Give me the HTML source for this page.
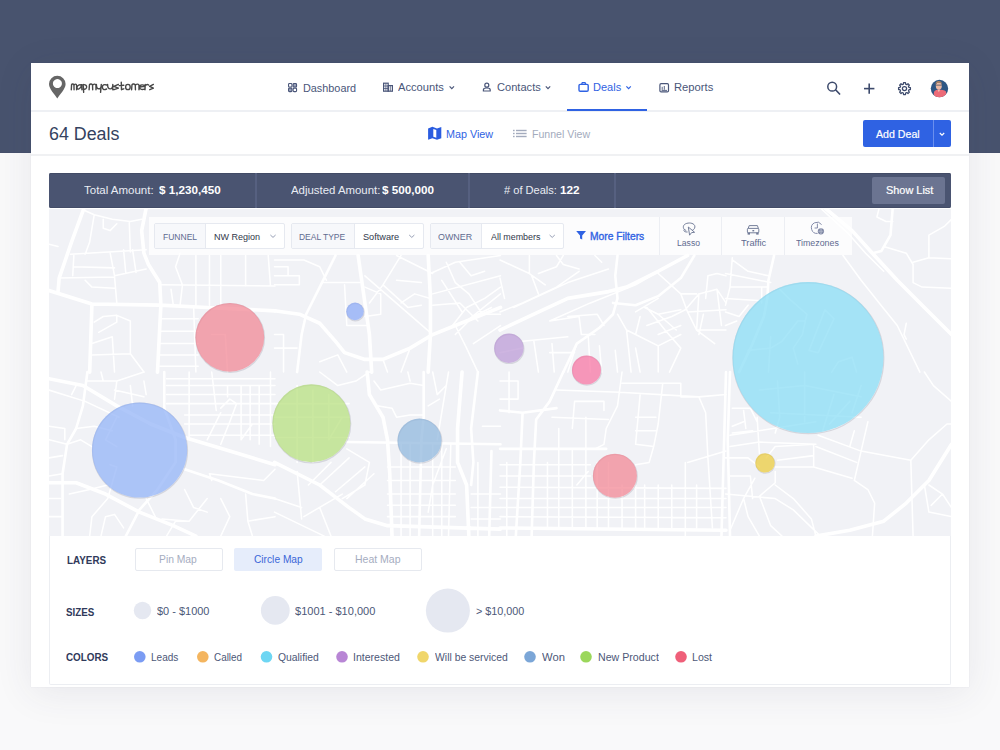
<!DOCTYPE html>
<html><head><meta charset="utf-8">
<style>
*{margin:0;padding:0;box-sizing:border-box}
html,body{width:1000px;height:750px;overflow:hidden}
body{background:#f4f5f7;position:relative;font-family:"Liberation Sans",sans-serif}
.a{position:absolute}
.t{position:absolute;white-space:pre;line-height:normal;font-family:"Liberation Sans",sans-serif}
svg{position:absolute;overflow:visible}
</style></head><body>
<!-- page background -->
<div class="a" style="left:0;top:0;width:1000px;height:153px;background:#48536e"></div>
<div class="a" style="left:0;top:152px;width:1000px;height:1px;background:#46506c"></div>
<div class="a" style="left:0;top:153px;width:1000px;height:597px;background:#f9f9fa"></div>
<!-- card -->
<div class="a" style="left:31px;top:63px;width:938px;height:624px;background:#fff;box-shadow:0 0 1px rgba(40,50,80,.10),0 6px 36px rgba(50,60,90,.09)"></div>
<div class="a" style="left:31px;top:110px;width:938px;height:2px;background:#eef0f4"></div>
<div class="a" style="left:567px;top:109px;width:80px;height:2px;background:#2f62e3"></div>
<div class="a" style="left:31px;top:154px;width:938px;height:2px;background:#f0f1f3"></div>

<!-- logo pin -->
<svg style="left:0;top:0" width="1000" height="120" viewBox="0 0 1000 120">
  <path d="M57.3,98.6 C55,94.5 49,89 49,84 A8.3,8.3 0 0 1 65.6,84 C65.6,89 59.6,94.5 57.3,98.6 Z M57.4,79.1 A4.5,4.5 0 1 0 57.41,79.1 Z" fill="#666666" fill-rule="evenodd"/>
  <!--LOGO-->
  <path d="M71.30,89.7 L71.56,84.80000000000001 C72.09,83.5 73.95,83.80000000000001 73.95,85.60000000000001 L74.06,89.7 M73.95,85.60000000000001 C74.48,83.5 76.60,83.80000000000001 76.60,85.60000000000001 L76.60,89.7 M81.90,85.4 C79.94,84.0 77.00,85.0 77.00,87.8 C77.25,90.0 80.43,89.7 81.66,84.80000000000001 L81.90,89.7 M83.22,84.4 L83.66,92.4 M83.00,84.80000000000001 C87.84,83.60000000000001 87.84,90.10000000000001 83.22,89.10000000000001 M89.10,89.7 L89.44,84.80000000000001 C90.13,83.5 92.55,83.80000000000001 92.55,85.60000000000001 L92.69,89.7 M92.55,85.60000000000001 C93.24,83.5 96.00,83.80000000000001 96.00,85.60000000000001 L96.00,89.7 M96.40,84.4 C96.40,90.2 101.30,90.2 101.30,84.4 L100.56,92.4 M106.60,85.0 C104.08,84.0 102.40,85.2 102.40,87.0 C102.40,90.10000000000001 104.50,89.9 106.60,89.0 M107.60,84.4 C107.60,90.3 112.80,90.3 112.80,84.4 L112.80,89.7 M118.40,84.4 L113.80,86.4 L118.40,88.2 L114.03,89.7 M121.27,82.2 L121.50,89.7 M119.20,85.60000000000001 L123.80,85.2 M121.50,89.5 L123.80,88.8 M125.60,87.0 A2.30,2.65 0 1 0 130.20,87.0 A2.30,2.65 0 1 0 125.60,87.0 M131.60,89.7 L131.97,84.80000000000001 C132.71,83.5 135.30,83.80000000000001 135.30,85.60000000000001 L135.45,89.7 M135.30,85.60000000000001 C136.04,83.5 139.00,83.80000000000001 139.00,85.60000000000001 L139.00,89.7 M139.84,87.0 L144.30,86.4 C144.30,84.10000000000001 139.60,84.4 139.60,87.0 C139.60,90.0 142.89,89.7 144.30,89.10000000000001 M145.18,84.4 L145.00,89.7 M145.00,86.0 C146.44,84.4 147.52,84.2 148.60,85.0 M153.40,84.4 L149.60,86.4 L153.40,88.2 L149.79,89.7" fill="none" stroke="#474747" stroke-width="1.4" stroke-linecap="round" stroke-linejoin="round"/>
  <!-- dashboard icon -->
  <g fill="none" stroke="#4a5679" stroke-width="1.1">
    <rect x="288.55" y="83.55" width="3.4" height="3.5" rx="0.9"/>
    <rect x="293.15" y="83.55" width="3.4" height="3.5" rx="0.9" fill="#9aa2b9"/>
    <rect x="288.55" y="88.15" width="3.4" height="3.5" rx="0.9" fill="#9aa2b9"/>
    <rect x="293.15" y="88.15" width="3.4" height="3.5" rx="0.9"/>
  </g>
  <!-- accounts icon (building) -->
  <g fill="none" stroke="#4a5679" stroke-width="1.2">
    <rect x="383.6" y="83.2" width="4.6" height="8"/>
    <rect x="388.2" y="85.6" width="4.2" height="5.6"/>
  </g>
  <g stroke="#4a5679" stroke-width="0.8">
    <line x1="385.9" y1="83.5" x2="385.9" y2="91"/>
    <line x1="383.8" y1="86" x2="388" y2="86"/>
    <line x1="383.8" y1="88.5" x2="388" y2="88.5"/>
    <line x1="390.3" y1="86" x2="390.3" y2="91"/>
  </g>
  <path d="M449.6,86.4 L451.8,88.6 L454,86.4" fill="none" stroke="#4a5679" stroke-width="1.2"/>
  <!-- contacts icon -->
  <circle cx="486.8" cy="85.2" r="2" fill="none" stroke="#4a5679" stroke-width="1.2"/>
  <path d="M483.4,91 L483.4,89.8 C483.4,88.6 484.4,88 486.8,88 C489.2,88 490.2,88.6 490.2,89.8 L490.2,91 Z" fill="none" stroke="#4a5679" stroke-width="1.2"/>
  <path d="M545.8,86.4 L548,88.6 L550.2,86.4" fill="none" stroke="#4a5679" stroke-width="1.2"/>
  <!-- deals icon briefcase -->
  <rect x="579" y="84.4" width="9.2" height="6.8" rx="1.2" fill="none" stroke="#2f62e3" stroke-width="1.4"/>
  <path d="M581.6,84.4 L582.3,82.6 L585,82.6 L585.7,84.4" fill="none" stroke="#2f62e3" stroke-width="1.3"/>
  <path d="M626.4,86.4 L628.6,88.6 L630.8,86.4" fill="none" stroke="#2f62e3" stroke-width="1.2"/>
  <!-- reports icon -->
  <rect x="659.9" y="83.7" width="8.6" height="8.2" rx="1.2" fill="none" stroke="#4a5679" stroke-width="1.2"/>
  <g stroke="#4a5679" stroke-width="0.9">
    <line x1="662.2" y1="86.8" x2="662.2" y2="89.8"/>
    <line x1="664.3" y1="86" x2="664.3" y2="89.8"/>
    <line x1="661.6" y1="90.4" x2="667" y2="90.4"/>
  </g>
  <!-- search -->
  <circle cx="832.2" cy="86.7" r="4.4" fill="none" stroke="#3d4a6c" stroke-width="1.5"/>
  <line x1="835.8" y1="90" x2="839.6" y2="94" stroke="#3d4a6c" stroke-width="1.7" stroke-linecap="round"/>
  <!-- plus -->
  <line x1="864" y1="88.6" x2="874.4" y2="88.6" stroke="#3d4a6c" stroke-width="1.6"/>
  <line x1="869.2" y1="83.4" x2="869.2" y2="93.8" stroke="#3d4a6c" stroke-width="1.6"/>
  <!-- gear -->
  <g fill="none" stroke="#3d4a6c" stroke-width="1.25" stroke-linejoin="round">
    <path d="M908.96,87.49 L910.42,87.61 L910.42,89.59 L908.96,89.71 L908.44,90.97 L909.38,92.09 L907.99,93.48 L906.87,92.54 L905.61,93.06 L905.49,94.52 L903.51,94.52 L903.39,93.06 L902.13,92.54 L901.01,93.48 L899.62,92.09 L900.56,90.97 L900.04,89.71 L898.58,89.59 L898.58,87.61 L900.04,87.49 L900.56,86.23 L899.62,85.11 L901.01,83.72 L902.13,84.66 L903.39,84.14 L903.51,82.68 L905.49,82.68 L905.61,84.14 L906.87,84.66 L907.99,83.72 L909.38,85.11 L908.44,86.23 Z"/>
    <circle cx="904.5" cy="88.6" r="2.1"/>
  </g>
  <!-- avatar -->
  <defs><clipPath id="av"><circle cx="939.45" cy="88.55" r="8.7"/></clipPath></defs>
  <g clip-path="url(#av)">
    <rect x="930" y="79" width="19" height="19" fill="#2d5684"/>
    <path d="M933.5,98 L934,92 C934.5,90.5 936.5,89.8 938.8,89.6 C941.2,89.8 944.5,90.2 946,91.5 L947,98 Z" fill="#ec6b78"/>
    <path d="M937.5,89.6 L938.8,92.2 L940.2,89.6 Z" fill="#f1c0b0"/>
    <ellipse cx="938.8" cy="86" rx="3" ry="3.6" fill="#eab8a4"/>
    <path d="M935.6,85 C935.4,81.8 937,81 938.8,81 C940.8,81 942.2,82 941.9,85 L941.2,83.2 C940,82.6 937.6,82.6 936.4,83.3 Z" fill="#a88062"/>
    <rect x="935.8" y="84.6" width="6" height="1.1" fill="#5b5f6a" opacity="0.8"/>
  </g>
  <!-- map view icon -->
  <path d="M428.1,128.4 L432.4,126.8 L437,128.4 L441.3,126.9 L441.3,138.2 L437,139.8 L432.4,138.2 L428.1,139.8 Z" fill="#2a5ce0"/>
  <path d="M433.3,129.1 L436.3,130.1 L436.3,137.8 L433.3,136.8 Z" fill="#ffffff"/>
  <!-- list icon -->
  <g fill="#a3abbd">
    <rect x="513" y="129.8" width="1.6" height="1.4"/>
    <rect x="513" y="132.8" width="1.6" height="1.4"/>
    <rect x="513" y="135.8" width="1.6" height="1.4"/>
    <rect x="516" y="129.8" width="10.6" height="1.4"/>
    <rect x="516" y="132.8" width="10.6" height="1.4"/>
    <rect x="516" y="135.8" width="10.6" height="1.4"/>
  </g>
</svg>

<!-- add deal button -->
<div class="a" style="left:863px;top:120px;width:88px;height:26.5px;background:#2f62e3;border-radius:2px"></div>
<div class="a" style="left:933px;top:120px;width:1px;height:26.5px;background:#6a8fee"></div>
<svg style="left:0;top:0" width="1000" height="200" viewBox="0 0 1000 200">
  <path d="M939.8,133 L942,135.2 L944.2,133" fill="none" stroke="#ffffff" stroke-width="1.2"/>
</svg>

<!-- stats bar -->
<div class="a" style="left:49px;top:173px;width:902px;height:35px;background:#4a5471;border-radius:2px;box-shadow:inset 0 1px 0 #424b66,inset 0 -1px 0 #434c67"></div>
<div class="a" style="left:255.4px;top:173px;width:1.6px;height:35px;background:#566080"></div>
<div class="a" style="left:468.4px;top:173px;width:1.6px;height:35px;background:#566080"></div>
<div class="a" style="left:614.4px;top:173px;width:1.6px;height:35px;background:#566080"></div>
<div class="a" style="left:872px;top:177px;width:73px;height:26.5px;background:#6b7491;border-radius:2px"></div>

<!-- map -->
<div class="a" style="left:49px;top:209px;width:902px;height:327px;background:#f1f2f6;overflow:hidden"><div style="position:absolute;left:0;top:-1px;width:902px;height:328px">
<svg width="902" height="328" viewBox="0 0 902 328" style="left:0;top:0">
<g fill="none" stroke="#ffffff" stroke-linecap="round" stroke-linejoin="round">
<g transform="translate(0.0,0) scale(0.226)">
<path stroke-width="16" d="M0,365 L190,425 L490,430 L700,440 L1000,455 M155,0 L100,150 L45,310 L40,370 M430,0 L410,100 L420,200 L440,250 L490,330 L495,430 L480,726 M190,425 L180,726"/>
<path stroke-width="6.8" d="M45,310 L290,305 L300,420 M95,205 L430,185 M110,210 L105,300 M110,260 L290,265 M270,195 L290,300 M160,320 L190,350 L290,355 M155,10 L200,30 L280,50 L360,60 L410,50 M200,30 L180,150 L160,205 M240,50 L240,90 L270,100 L300,70 M355,60 L360,195 M330,185 L340,290 M370,185 L385,285 M290,300 L430,270 M490,340 L1000,345 M580,200 L560,260 L590,340 M650,210 L650,430 M710,210 L710,430 M760,210 L760,430 M870,210 L870,345 M970,210 L980,345 M540,360 L550,430 M590,345 L580,430 M0,160 L40,170 M200,505 L240,480 L300,475 L300,505 L220,550 M190,600 L280,570 L290,726 M190,650 L360,645 L420,726 M300,475 L360,500 L360,645 M490,490 L660,490 M490,545 L660,545 M490,600 L660,600 M490,650 L660,650 M490,700 L660,700 M640,440 L650,726 M720,560 L780,560 L790,726"/>
</g>
<g transform="translate(225.5,0) scale(0.226)">
<path stroke-width="16" d="M0,455 L110,470 L200,510 L270,590 L310,640 L400,670 L480,670 L600,620 L700,560 L800,520 L1000,440 M370,210 L400,420 L420,560 L430,726 M680,210 L690,400 L690,560 L680,726"/>
<path stroke-width="11.5" d="M270,210 L210,330 L140,470 L120,560 L100,726"/>
<path stroke-width="6.8" d="M0,300 L110,300 L110,340 L0,340 M0,230 L130,230 M210,330 L380,330 M310,340 L320,520 L410,520 M400,480 L470,470 L470,380 L400,350 M480,340 L590,440 L650,430 M540,320 L650,330 M600,240 L700,290 M560,210 L480,340 L420,420 M690,290 L800,240 L1000,210 M400,300 L700,560 M700,380 L1000,300 M850,500 L1000,380 M760,240 L800,330 L860,380 L920,470 M820,240 L870,300 L930,280 M700,430 L820,420 L900,500 M740,320 L830,460 M0,560 L40,560 L40,726 M0,620 L100,620 M200,680 L280,650 L320,726 M800,520 L850,620 L900,726 M560,726 L600,620 M780,530 L850,440 L930,400 L1000,350 M800,560 L880,480 L960,440 M880,600 L1000,520 M920,470 L1000,470 M480,670 L500,726 M540,210 L600,240 M0,260 L60,260 L60,300 M130,230 L200,260 L230,320 M560,420 L620,380 L690,400"/>
</g>
<g transform="translate(451.0,0) scale(0.226)">
<path stroke-width="16" d="M0,540 L150,470 L300,400 L480,370 L560,350 L700,280 L830,210"/>
<path stroke-width="11.5" d="M280,726 L340,600 L440,530 L500,470 L520,400 L510,300 L520,210 M500,420 L600,430 L700,390 L800,310 L860,210"/>
<path stroke-width="6.8" d="M0,460 L100,420 L250,350 L350,280 M60,440 L300,330 L480,270 M0,230 L130,290 L200,340 M130,210 L130,290 M250,210 L280,250 L350,270 M0,310 L20,400 M140,300 L170,380 M420,210 L450,240 M700,290 L800,380 L830,460 L870,540 L950,600 M600,460 L700,400 M620,480 L600,560 L700,610 L800,560 M650,440 L730,540 L800,620 L750,726 M700,470 L780,540 M820,450 L880,380 L960,360 L1000,420 M830,460 L1000,450 M880,380 L870,540 M920,300 L960,290 L1000,300 M920,300 L910,400 M960,360 L980,520 M870,540 L1000,540 M300,480 L430,470 L460,520 M220,500 L350,480 L360,560 L420,560 M100,590 L300,570 M150,590 L170,726 M230,600 L240,726 M390,560 L400,726 M440,610 L450,726 M510,630 L520,726 M560,540 L580,726 M520,470 L560,540 L600,560 M220,500 L400,420 L600,340 L720,270 M420,380 L560,350 M640,440 L700,470 L800,450 M650,520 L760,480 L820,450 M700,560 L800,520 M800,380 L870,380 M900,470 L880,560 M0,640 L100,620 M220,640 L330,640 M280,210 L250,260 L170,290 M340,600 L300,726 M600,620 L620,726 M700,610 L700,726"/>
</g>
<g transform="translate(676.5,0) scale(0.226)">
<path stroke-width="16" d="M440,0 L560,100 L650,200 L760,320 L880,440 L1000,560"/>
<path stroke-width="11.5" d="M215,210 L190,320 L185,400 L170,480 L120,600 L60,726 M740,0 L730,120 L690,190 L650,200"/>
<path stroke-width="6.8" d="M420,0 L540,110 L620,200 L700,280 M520,210 L600,320 L680,420 L760,520 L860,726 M700,170 L800,200 L830,250 L830,330 L870,350 L1000,355 M830,240 L900,220 L1000,225 M900,220 L900,120 L970,80 L1000,50 M680,0 L670,40 L710,60 L740,60 M800,510 L790,560 L800,580 M0,290 L200,330 M30,220 L20,350 L0,430 M20,350 L190,350 M0,400 L160,410 M0,460 L60,480 L100,430 M0,520 L50,500 M160,350 L160,420 M30,230 L100,280 L190,300 M240,360 L280,400 L360,470 L340,560 L300,620 L320,690 M200,570 L190,726 M100,630 L200,620 L250,590 L320,500 L350,500 M370,630 L440,450 L480,490 L410,640 Z M470,726 L500,680 L560,660 L580,726"/>
</g>
<g transform="translate(0.0,164) scale(0.226)">
<path stroke-width="16" d="M0,30 L150,60 L300,150 L450,230 L600,290 L800,350 L1000,410 M0,490 L120,490 L250,540 L400,620 L550,680 L650,726"/>
<path stroke-width="11.5" d="M170,0 L150,150 L120,250 L80,320 L60,450 L60,726 M510,0 L510,160 L560,300 L560,400 L480,520 L400,610 L340,726 M600,430 L750,480 L900,540 L1000,560"/>
<path stroke-width="6.8" d="M0,80 L160,130 L310,200 M120,60 L100,100 M230,0 L240,40 M300,40 L290,120 M360,60 L370,150 M420,40 L430,100 M170,40 L300,40 L420,0 M290,80 L420,110 M520,30 L1000,30 M520,60 L1000,60 M520,100 L1000,100 M520,140 L1000,140 M600,190 L1000,190 M600,230 L1000,230 M620,280 L1000,280 M620,0 L620,290 M720,0 L740,170 M790,60 L790,110 M850,60 L850,300 M890,60 L890,300 M930,60 L930,320 M980,0 L980,330 M760,160 L800,120 L830,140 L800,220 L760,320 M700,300 L760,180 M850,300 L900,230 M0,240 L70,250 L70,300 M80,320 L140,300 L190,330 M0,460 L60,450 M0,560 L50,560 M0,640 L60,640 M270,410 L300,420 L260,560 L190,640 L180,726 M230,726 L250,640 L290,630 L330,690 M710,450 L720,480 M710,450 L950,480 L1000,430 M700,560 L620,660 L500,650 M870,540 L880,660 L1000,640 M880,660 L900,726 M90,540 L180,520 L260,500 M0,380 L60,370 M0,300 L80,320 M120,250 L200,240 L280,260 M300,200 L250,300 L300,330 M430,560 L470,640 M600,520 L640,600 L700,620 M760,560 L800,640 L760,726 M520,726 L560,660 L620,660"/>
</g>
<g transform="translate(225.5,164) scale(0.226)">
<path stroke-width="16" d="M0,400 L200,500 L330,600 L400,650 L500,680 L1000,695 M410,0 L420,100 L480,200 L500,300 L510,450 L520,726 M830,0 L810,250 L810,400 L850,500 L860,726"/>
<path stroke-width="11.5" d="M660,0 L660,200 L650,300 L640,726 M320,310 L1000,320 M900,0 L870,250 L880,400 L870,500 M960,350 L950,726"/>
<path stroke-width="6.8" d="M560,320 L560,726 M600,320 L600,726 M700,320 L700,726 M740,320 L740,726 M780,320 L770,726 M500,420 L800,420 M500,480 L800,480 M500,540 L800,540 M500,590 L800,590 M500,640 L800,640 M870,540 L1000,540 M870,600 L1000,600 M870,650 L1000,650 M900,400 L900,726 M0,560 L120,600 M130,640 L300,540 M0,620 L220,726 M200,600 L250,726 M100,440 L120,650 M320,340 L420,400 L400,500 L300,560 M250,400 L150,500 M330,380 L200,500 M400,420 L270,530 M440,450 L320,560 M440,40 L470,80 L600,50 L660,60 M200,0 L280,60 L360,40 L420,0 M590,0 L600,40 M460,150 L520,160 L540,200 L600,190 L660,190 M700,0 L720,100 L760,60 M730,120 L680,150 M770,0 L720,300 M920,240 L1000,240 M760,340 L700,500 L680,620 M0,140 L330,140 M0,200 L330,200 M0,290 L330,290 M100,60 L100,400 M170,80 L170,400 M240,100 L240,300 L300,200"/>
</g>
<g transform="translate(451.0,164) scale(0.226)">
<path stroke-width="16" d="M0,690 L1000,700"/>
<path stroke-width="11.5" d="M280,0 L220,130 L160,210 L150,400 L140,726 M100,180 L90,400 L70,726 M1000,0 L980,726 M0,170 L100,180 L250,160 M0,340 L470,340"/>
<path stroke-width="6.8" d="M30,400 L30,726 M210,400 L210,690 M260,250 L260,690 M320,340 L320,690 M380,200 L380,690 M430,400 L430,690 M480,400 L480,690 M540,500 L540,690 M600,500 L600,690 M640,500 L640,690 M700,500 L700,690 M760,500 L760,690 M820,400 L820,726 M870,500 L870,690 M920,380 L940,690 M0,410 L400,410 M0,460 L400,460 M0,510 L1000,515 M0,560 L1000,560 M0,600 L1000,600 M0,640 L1000,645 M540,0 L520,150 L470,250 L460,320 L420,340 M620,100 L600,320 L680,330 L660,400 L600,410 M720,50 L700,230 L680,330 M540,50 L800,50 L800,110 L880,110 L1000,100 M880,110 L910,180 L920,380 M830,400 L1000,350 M250,80 L530,90 L880,110 M230,200 L480,210 M330,130 L460,130 L460,170 M330,130 L320,250 M0,40 L80,40 L80,120 L0,120 M40,0 L40,180 M600,200 L690,200 M600,260 L690,260 M390,440 L340,500"/>
</g>
<g transform="translate(676.5,164) scale(0.226)">
<path stroke-width="16" d="M1000,320 L900,480 L800,580 L700,660 L550,700 L400,726"/>
<path stroke-width="11.5" d="M20,0 L10,300 L20,726"/>
<path stroke-width="6.8" d="M20,330 L150,310 L400,320 M20,280 L400,220 M140,200 L150,360 M30,160 L110,160 L140,220 M30,240 L80,220 M80,170 L90,250 M30,270 L120,260 M0,380 L100,380 L150,420 M20,460 L110,460 L120,560 M180,380 L220,330 L390,320 M230,390 L390,370 M210,420 L390,420 L560,470 M390,320 L390,420 M410,280 L600,350 L820,390 L900,300 L980,230 L1000,230 M400,330 L580,400 M570,260 L550,330 M630,220 L600,350 L570,480 L630,520 L660,580 L650,726 M0,540 L220,560 L300,610 L420,726 M220,440 L220,490 L150,550 L200,680 L250,726 M220,500 L300,560 L380,650 L400,726 M80,560 L20,700 M80,560 L100,640 L150,726 M130,470 L80,560 M820,390 L830,726 M880,500 L900,620 L1000,640 M900,500 L960,540 L1000,600 M910,590 L960,540 M880,0 L920,60 L1000,130 M150,80 L250,70 L350,60 L600,110 M200,180 L600,200 M350,0 L350,220 M230,40 L240,200 L220,270 M480,100 L430,260 M550,130 L460,230 M600,60 L560,180"/>
</g>
</g>
<g id="circles">
  <circle cx="181.2" cy="130.0" r="34.3" fill="none" stroke="rgba(70,70,95,0.16)" stroke-width="1.2"/>
  <circle cx="306.4" cy="104.1" r="8.7" fill="none" stroke="rgba(70,70,95,0.16)" stroke-width="1.2"/>
  <circle cx="91.0" cy="242.7" r="47.5" fill="none" stroke="rgba(70,70,95,0.16)" stroke-width="1.2"/>
  <circle cx="262.8" cy="216.0" r="38.9" fill="none" stroke="rgba(70,70,95,0.16)" stroke-width="1.2"/>
  <circle cx="370.9" cy="233.2" r="21.9" fill="none" stroke="rgba(70,70,95,0.16)" stroke-width="1.2"/>
  <circle cx="460.3" cy="140.9" r="14.6" fill="none" stroke="rgba(70,70,95,0.16)" stroke-width="1.2"/>
  <circle cx="537.9" cy="162.7" r="14.4" fill="none" stroke="rgba(70,70,95,0.16)" stroke-width="1.2"/>
  <circle cx="566.3" cy="268.4" r="21.9" fill="none" stroke="rgba(70,70,95,0.16)" stroke-width="1.2"/>
  <circle cx="759.4" cy="150.3" r="75.4" fill="none" stroke="rgba(70,70,95,0.16)" stroke-width="1.2"/>
  <circle cx="716.4" cy="255.6" r="9.6" fill="none" stroke="rgba(70,70,95,0.16)" stroke-width="1.2"/>
  <circle cx="180.8" cy="129.3" r="34.4" fill="rgb(241, 132, 145)" fill-opacity="0.72"/>
  <circle cx="306" cy="103.4" r="8.8" fill="rgb(137, 168, 246)" fill-opacity="0.72"/>
  <circle cx="90.6" cy="242" r="47.6" fill="rgb(144, 177, 247)" fill-opacity="0.72"/>
  <circle cx="262.4" cy="215.3" r="39" fill="rgb(181, 223, 124)" fill-opacity="0.72"/>
  <circle cx="370.5" cy="232.5" r="22" fill="rgb(142, 182, 221)" fill-opacity="0.72"/>
  <circle cx="459.9" cy="140.2" r="14.7" fill="rgb(187, 153, 213)" fill-opacity="0.72"/>
  <circle cx="537.5" cy="162" r="14.5" fill="rgb(248, 114, 161)" fill-opacity="0.72"/>
  <circle cx="565.9" cy="267.7" r="22" fill="rgb(242, 131, 146)" fill-opacity="0.72"/>
  <circle cx="759" cy="149.6" r="75.5" fill="rgb(134, 221, 245)" fill-opacity="0.72"/>
  <circle cx="716" cy="254.9" r="9.7" fill="rgb(235, 203, 57)" fill-opacity="0.72"/>
</g>
</svg>

</div></div>

<!-- filter bar -->
<div class="a" style="left:149px;top:217px;width:703px;height:37.5px;background:rgba(255,255,255,0.75)"></div>
<div class="a" style="left:154px;top:223px;width:130.5px;height:26px;background:#fff;border:1px solid #e6e9f0;border-radius:2px"></div>
<div class="a" style="left:155px;top:224px;width:50.5px;height:24px;background:#f7f8fb;border-right:1px solid #e6e9f0"></div>
<div class="a" style="left:290.5px;top:223px;width:133px;height:26px;background:#fff;border:1px solid #e6e9f0;border-radius:2px"></div>
<div class="a" style="left:291.5px;top:224px;width:63px;height:24px;background:#f7f8fb;border-right:1px solid #e6e9f0"></div>
<div class="a" style="left:430px;top:223px;width:133.5px;height:26px;background:#fff;border:1px solid #e6e9f0;border-radius:2px"></div>
<div class="a" style="left:431px;top:224px;width:51px;height:24px;background:#f7f8fb;border-right:1px solid #e6e9f0"></div>
<div class="a" style="left:658.5px;top:217px;width:1px;height:37.5px;background:#eceef3"></div>
<div class="a" style="left:720.5px;top:217px;width:1px;height:37.5px;background:#eceef3"></div>
<div class="a" style="left:784px;top:217px;width:1px;height:37.5px;background:#eceef3"></div>
<svg style="left:0;top:0" width="1000" height="300" viewBox="0 0 1000 300">
  <g fill="none" stroke="#8a93ab" stroke-width="0.9">
    <path d="M270.4,235 L273,237.4 L275.6,235"/>
    <path d="M409.2,235 L411.8,237.4 L414.4,235"/>
    <path d="M549.6,235 L552.2,237.4 L554.8,235"/>
  </g>
  <!-- funnel -->
  <path d="M576.2,231 L586,231 L582.2,235.6 L582.2,239.6 L580,238.4 L580,235.6 Z" fill="#2f62e3"/>
  <!-- lasso -->
  <g fill="none" stroke="#6f7996" stroke-width="0.95" stroke-linejoin="round">
    <path d="M686.2,230.4 C682.6,229.6 682.4,225.2 685.6,223.8 C688.6,222.4 693.2,222.8 694.6,225.4 C695.6,227.4 694.2,229.6 692.2,230.4"/>
    <path d="M688.3,227 L694.6,232.3 L691.6,232.6 L689.6,235.2 Z"/>
    <path d="M683.8,229.8 C683.6,231.4 685.2,232.2 687.6,232"/>
  </g>
  <!-- traffic (car) -->
  <g fill="none" stroke="#6f7996" stroke-width="0.95" stroke-linejoin="round">
    <path d="M748.2,228.4 L749.2,225.6 L757.4,225.6 L758.4,228.4"/>
    <rect x="747.4" y="228.4" width="11.4" height="4.4" rx="0.8"/>
    <rect x="752.4" y="230" width="1.8" height="1.4" fill="#6f7996" stroke="none"/>
  </g>
  <g fill="#6f7996">
    <rect x="747.6" y="232.6" width="2.4" height="2"/>
    <rect x="756.2" y="232.6" width="2.4" height="2"/>
  </g>
  <!-- timezones -->
  <g fill="none" stroke="#7880a0" stroke-width="0.9">
    <path d="M821.6,224.6 A5.6,5.6 0 1 0 817.6,233.4"/>
    <path d="M817.4,223.6 L817.4,228 L814.6,228"/>
  </g>
  <circle cx="820.9" cy="231.3" r="3.1" fill="#7c84a2"/>
  <path d="M818.2,231.3 L823.6,231.3 M820.9,228.4 C819.8,229.8 819.8,232.8 820.9,234.2 M820.9,228.4 C822,229.8 822,232.8 820.9,234.2" stroke="#c9cedb" stroke-width="0.5" fill="none"/>
</svg>

<!-- legend panel -->
<div class="a" style="left:49px;top:536px;width:902px;height:149px;background:#fff;border:1px solid #eceef2;border-top:none;border-radius:0 0 2px 2px"></div>
<div class="a" style="left:134.6px;top:547.6px;width:88px;height:23px;background:#fff;border:1px solid #e6e9ef;border-radius:2px"></div>
<div class="a" style="left:234px;top:547.8px;width:88px;height:23px;background:#e6edfb;border-radius:2px"></div>
<div class="a" style="left:333.8px;top:547.6px;width:88px;height:23px;background:#fff;border:1px solid #e6e9ef;border-radius:2px"></div>
<svg style="left:0;top:0" width="1000" height="750" viewBox="0 0 1000 750">
  <circle cx="142.5" cy="610.5" r="8.7" fill="#e5e8f1"/>
  <circle cx="275.3" cy="610.4" r="14.4" fill="#e5e8f1"/>
  <circle cx="447.9" cy="610.6" r="22" fill="#e5e8f1"/>
  <circle cx="139.8" cy="656.8" r="5.8" fill="#7b9cf3"/>
  <circle cx="202.8" cy="656.8" r="5.8" fill="#f4b55f"/>
  <circle cx="266.5" cy="656.8" r="5.8" fill="#6ed6f3"/>
  <circle cx="342" cy="656.8" r="5.8" fill="#b886d5"/>
  <circle cx="423" cy="656.8" r="5.8" fill="#f0d66b"/>
  <circle cx="530" cy="656.8" r="5.8" fill="#7ba6d7"/>
  <circle cx="586" cy="656.8" r="5.8" fill="#9bd75b"/>
  <circle cx="681" cy="656.8" r="5.8" fill="#ef5f79"/>
</svg>

<div class="t" style="left:303.3px;top:81.57px;font-size:11.3px;font-weight:400;color:#4a5679;transform:scaleX(0.9602);transform-origin:0 0;">Dashboard</div>
<div class="t" style="left:398.0px;top:80.97px;font-size:11.3px;font-weight:400;color:#4a5679;transform:scaleX(0.9876);transform-origin:0 0;">Accounts</div>
<div class="t" style="left:496.7px;top:80.97px;font-size:11.3px;font-weight:400;color:#4a5679;transform:scaleX(0.9819);transform-origin:0 0;">Contacts</div>
<div class="t" style="left:593.4px;top:80.97px;font-size:11.3px;font-weight:400;color:#2f62e3;transform:scaleX(0.9755);transform-origin:0 0;">Deals</div>
<div class="t" style="left:674.0px;top:80.97px;font-size:11.3px;font-weight:400;color:#4a5679;transform:scaleX(0.9933);transform-origin:0 0;">Reports</div>
<div class="t" style="left:48.5px;top:122.84px;font-size:18.3px;font-weight:400;color:#344260;transform:scaleX(0.9761);transform-origin:0 0;">64 Deals</div>
<div class="t" style="left:446.1px;top:127.53px;font-size:10.8px;font-weight:400;color:#2f62e3;transform:scaleX(0.9988);transform-origin:0 0;">Map View</div>
<div class="t" style="left:532.0px;top:127.53px;font-size:10.8px;font-weight:400;color:#a3abbd;transform:scaleX(0.9799);transform-origin:0 0;">Funnel View</div>
<div class="t" style="left:876.1px;top:127.75px;font-size:11.0px;font-weight:400;color:#ffffff;transform:scaleX(0.9643);transform-origin:0 0;-webkit-text-stroke:0.2px #ffffff;">Add Deal</div>
<div class="t" style="left:83.9px;top:184.09px;font-size:11.5px;font-weight:400;color:#e9ecf3;transform:scaleX(0.9990);transform-origin:0 0;">Total Amount:</div>
<div class="t" style="left:158.9px;top:184.09px;font-size:11.5px;font-weight:700;color:#ffffff;transform:scaleX(1.0143);transform-origin:0 0;">$ 1,230,450</div>
<div class="t" style="left:290.9px;top:184.09px;font-size:11.5px;font-weight:400;color:#e9ecf3;transform:scaleX(0.9917);transform-origin:0 0;">Adjusted Amount:</div>
<div class="t" style="left:382.0px;top:184.09px;font-size:11.5px;font-weight:700;color:#ffffff;transform:scaleX(1.0169);transform-origin:0 0;">$ 500,000</div>
<div class="t" style="left:504.4px;top:184.09px;font-size:11.5px;font-weight:400;color:#e9ecf3;transform:scaleX(0.9618);transform-origin:0 0;"># of Deals:</div>
<div class="t" style="left:560.2px;top:184.09px;font-size:11.5px;font-weight:700;color:#ffffff;transform:scaleX(1.0237);transform-origin:0 0;">122</div>
<div class="t" style="left:885.9px;top:183.96px;font-size:11.2px;font-weight:400;color:#ffffff;transform:scaleX(0.9765);transform-origin:0 0;-webkit-text-stroke:0.2px #ffffff;">Show List</div>
<div class="t" style="left:162.8px;top:230.81px;font-size:9.6px;font-weight:400;color:#5f6b90;transform:scaleX(0.8878);transform-origin:0 0;">FUNNEL</div>
<div class="t" style="left:214.2px;top:231.21px;font-size:9.6px;font-weight:400;color:#30374a;transform:scaleX(0.9401);transform-origin:0 0;">NW Region</div>
<div class="t" style="left:299.0px;top:230.81px;font-size:9.6px;font-weight:400;color:#5f6b90;transform:scaleX(0.8835);transform-origin:0 0;">DEAL TYPE</div>
<div class="t" style="left:362.5px;top:231.21px;font-size:9.6px;font-weight:400;color:#30374a;transform:scaleX(0.9567);transform-origin:0 0;">Software</div>
<div class="t" style="left:438.3px;top:230.81px;font-size:9.6px;font-weight:400;color:#5f6b90;transform:scaleX(0.9274);transform-origin:0 0;">OWNER</div>
<div class="t" style="left:490.5px;top:231.21px;font-size:9.6px;font-weight:400;color:#30374a;transform:scaleX(0.9268);transform-origin:0 0;">All members</div>
<div class="t" style="left:590.3px;top:230.41px;font-size:10.6px;font-weight:400;color:#2f62e3;transform:scaleX(0.9696);transform-origin:0 0;-webkit-text-stroke:0.35px #2f62e3;">More Filters</div>
<div class="t" style="left:677.2px;top:237.67px;font-size:9.2px;font-weight:400;color:#5f6b90;transform:scaleX(0.9372);transform-origin:0 0;">Lasso</div>
<div class="t" style="left:740.5px;top:238.47px;font-size:9.2px;font-weight:400;color:#5f6b90;transform:scaleX(1.0091);transform-origin:0 0;">Traffic</div>
<div class="t" style="left:796.0px;top:238.47px;font-size:9.2px;font-weight:400;color:#5f6b90;transform:scaleX(0.9599);transform-origin:0 0;">Timezones</div>
<div class="t" style="left:67.2px;top:554.98px;font-size:10.3px;font-weight:700;color:#30395a;transform:scaleX(0.9574);transform-origin:0 0;">LAYERS</div>
<div class="t" style="left:159.4px;top:553.44px;font-size:11.0px;font-weight:400;color:#a6adbf;transform:scaleX(0.9372);transform-origin:0 0;">Pin Map</div>
<div class="t" style="left:253.8px;top:553.44px;font-size:11.0px;font-weight:400;color:#3a66d8;transform:scaleX(0.9265);transform-origin:0 0;">Circle Map</div>
<div class="t" style="left:355.1px;top:553.44px;font-size:11.0px;font-weight:400;color:#a6adbf;transform:scaleX(0.9547);transform-origin:0 0;">Heat Map</div>
<div class="t" style="left:66.2px;top:606.98px;font-size:10.3px;font-weight:700;color:#30395a;transform:scaleX(0.9502);transform-origin:0 0;">SIZES</div>
<div class="t" style="left:156.6px;top:604.64px;font-size:11.0px;font-weight:400;color:#4d5878;transform:scaleX(0.9975);transform-origin:0 0;">$0 - $1000</div>
<div class="t" style="left:294.9px;top:604.64px;font-size:11.0px;font-weight:400;color:#4d5878;transform:scaleX(1.0030);transform-origin:0 0;">$1001 - $10,000</div>
<div class="t" style="left:475.6px;top:604.64px;font-size:11.0px;font-weight:400;color:#4d5878;transform:scaleX(0.9820);transform-origin:0 0;">&gt; $10,000</div>
<div class="t" style="left:66.3px;top:652.38px;font-size:10.3px;font-weight:700;color:#30395a;transform:scaleX(0.9575);transform-origin:0 0;">COLORS</div>
<div class="t" style="left:151.0px;top:651.14px;font-size:11.0px;font-weight:400;color:#4d5878;transform:scaleX(0.9140);transform-origin:0 0;">Leads</div>
<div class="t" style="left:214.1px;top:651.14px;font-size:11.0px;font-weight:400;color:#4d5878;transform:scaleX(0.9008);transform-origin:0 0;">Called</div>
<div class="t" style="left:277.8px;top:651.14px;font-size:11.0px;font-weight:400;color:#4d5878;transform:scaleX(0.9403);transform-origin:0 0;">Qualified</div>
<div class="t" style="left:352.6px;top:651.14px;font-size:11.0px;font-weight:400;color:#4d5878;transform:scaleX(0.9575);transform-origin:0 0;">Interested</div>
<div class="t" style="left:434.6px;top:651.14px;font-size:11.0px;font-weight:400;color:#4d5878;transform:scaleX(0.9455);transform-origin:0 0;">Will be serviced</div>
<div class="t" style="left:541.5px;top:651.14px;font-size:11.0px;font-weight:400;color:#4d5878;transform:scaleX(1.0213);transform-origin:0 0;">Won</div>
<div class="t" style="left:597.5px;top:651.14px;font-size:11.0px;font-weight:400;color:#4d5878;transform:scaleX(0.9661);transform-origin:0 0;">New Product</div>
<div class="t" style="left:692.2px;top:651.14px;font-size:11.0px;font-weight:400;color:#4d5878;transform:scaleX(0.9640);transform-origin:0 0;">Lost</div>
</body></html>
